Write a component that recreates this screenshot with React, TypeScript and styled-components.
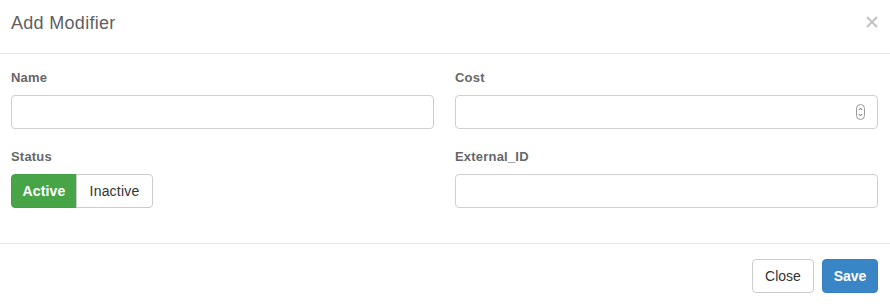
import React, { useState } from "react";
import styled, { createGlobalStyle } from "styled-components";

const Global = createGlobalStyle`
  html, body { margin: 0; padding: 0; background: #fff; }
  body { font-family: "Liberation Sans", Arial, sans-serif; color: #333; }
  * { box-sizing: border-box; }
`;

const Modal = styled.div`
  width: 890px;
  height: 304px;
  background: #fff;
  display: flex;
  flex-direction: column;
`;

const Header = styled.div`
  height: 54px;
  padding: 0 12px 0 11px;
  border-bottom: 1px solid #e5e5e5;
  display: flex;
  align-items: center;
  justify-content: space-between;
`;

const Title = styled.h4`
  margin: 0 0 6px 0;
  font-size: 18px;
  font-weight: 400;
  color: #5e5f61;
  letter-spacing: 0.3px;
`;

const CloseX = styled.button`
  border: 0;
  background: none;
  padding: 0;
  width: 12px;
  height: 12px;
  margin-bottom: 10px;
  display: flex;
  cursor: pointer;
`;

const Body = styled.div`
  padding: 15px 12px 35px 11px;
  display: grid;
  grid-template-columns: 423px 423px;
  column-gap: 21px;
  row-gap: 19px;
  border-bottom: 1px solid #e5e5e5;
`;

const Group = styled.div`
  display: flex;
  flex-direction: column;
`;

const Label = styled.label`
  font-size: 13px;
  font-weight: 700;
  color: #666769;
  line-height: 18px;
  margin-bottom: 8px;
  letter-spacing: 0.2px;
`;

const InputWrap = styled.div`
  position: relative;
`;

const Input = styled.input`
  width: 100%;
  height: 34px;
  border: 1px solid #cfcfcf;
  border-radius: 4px;
  padding: 6px 12px;
  font-size: 14px;
  font-family: inherit;
  outline: none;
`;

const Spinner = styled.svg`
  position: absolute;
  right: 13px;
  top: 9px;
`;

const Segmented = styled.div`
  display: flex;
`;

const SegButton = styled.button<{ $active?: boolean; $first?: boolean }>`
  height: 34px;
  width: ${(p) => (p.$first ? "66px" : "77px")};
  padding: 0;
  font-family: inherit;
  font-size: 14px;
  letter-spacing: 0.2px;
  font-weight: ${(p) => (p.$active ? 700 : 400)};
  color: ${(p) => (p.$active ? "#fff" : "#333")};
  background: ${(p) => (p.$active ? "#47a447" : "#fff")};
  border: 1px solid ${(p) => (p.$active ? "#43a043" : "#ccc")};
  border-radius: ${(p) => (p.$first ? "4px 0 0 4px" : "0 4px 4px 0")};
  margin-left: ${(p) => (p.$first ? "0" : "-1px")};
  cursor: pointer;
`;

const Footer = styled.div`
  flex: 1;
  padding: 15px 12px 11px 11px;
  display: flex;
  justify-content: flex-end;
  align-items: flex-start;
  gap: 8px;
`;

const Btn = styled.button<{ $primary?: boolean }>`
  height: 34px;
  width: ${(p) => (p.$primary ? "56px" : "62px")};
  padding: 0;
  font-family: inherit;
  font-size: 14px;
  font-weight: ${(p) => (p.$primary ? 700 : 400)};
  color: ${(p) => (p.$primary ? "#fff" : "#333")};
  background: ${(p) => (p.$primary ? "#3a85c6" : "#fff")};
  border: 1px solid ${(p) => (p.$primary ? "#3580c0" : "#ccc")};
  border-radius: 4px;
  cursor: pointer;
`;

export default function App() {
  const [active, setActive] = useState(true);
  return (
    <>
      <Global />
      <Modal>
        <Header>
          <Title>Add Modifier</Title>
          <CloseX aria-label="Close">
            <svg width="12" height="12" viewBox="0 0 12 12">
              <path d="M1 1 L11 11 M11 1 L1 11" stroke="#c4c4c4" strokeWidth="2.2" />
            </svg>
          </CloseX>
        </Header>
        <Body>
          <Group>
            <Label>Name</Label>
            <Input type="text" />
          </Group>
          <Group>
            <Label>Cost</Label>
            <InputWrap>
              <Input type="text" />
              <Spinner width="9" height="16" viewBox="0 0 9 16">
                <rect x="0.5" y="0.5" width="8" height="15" rx="4" fill="#fff" stroke="#9a9a9a" />
                <path d="M2.8 6 L4.5 4.2 L6.2 6" fill="none" stroke="#555" strokeWidth="0.9" />
                <path d="M2.8 10 L4.5 11.8 L6.2 10" fill="none" stroke="#555" strokeWidth="0.9" />
              </Spinner>
            </InputWrap>
          </Group>
          <Group>
            <Label>Status</Label>
            <Segmented>
              <SegButton $first $active={active} onClick={() => setActive(true)}>
                Active
              </SegButton>
              <SegButton $active={!active} onClick={() => setActive(false)}>
                Inactive
              </SegButton>
            </Segmented>
          </Group>
          <Group>
            <Label>External_ID</Label>
            <Input type="text" />
          </Group>
        </Body>
        <Footer>
          <Btn>Close</Btn>
          <Btn $primary>Save</Btn>
        </Footer>
      </Modal>
    </>
  );
}
